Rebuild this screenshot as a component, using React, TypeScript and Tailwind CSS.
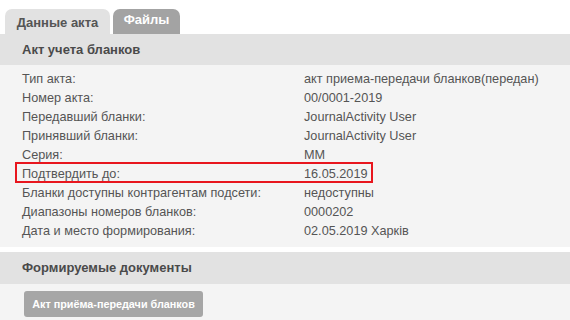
const rows: { label: string; value: string; highlight?: boolean }[] = [
  { label: "Тип акта:", value: "акт приема-передачи бланков(передан)" },
  { label: "Номер акта:", value: "00/0001-2019" },
  { label: "Передавший бланки:", value: "JournalActivity User" },
  { label: "Принявший бланки:", value: "JournalActivity User" },
  { label: "Серия:", value: "MM" },
  { label: "Подтвердить до:", value: "16.05.2019", highlight: true },
  { label: "Бланки доступны контрагентам подсети:", value: "недоступны" },
  { label: "Диапазоны номеров бланков:", value: "0000202" },
  { label: "Дата и место формирования:", value: "02.05.2019 Харків" },
];

export default function App() {
  return (
    <div className="w-[570px] h-[320px] overflow-hidden bg-white font-['Liberation_Sans',Arial,sans-serif] text-[#555]">
      {/* tabs */}
      <div className="flex items-end gap-[3px] pl-[5px] pt-[9px] h-[34px]">
        <div className="w-[105px] h-[25px] rounded-t-[7px] bg-[#e2e2e2] text-[13px] font-bold text-[#555] flex items-center justify-center pt-[2px]">
          Данные акта
        </div>
        <div className="w-[67px] h-[25px] rounded-t-[7px] bg-[#a3a3a3] text-[13px] font-bold text-white flex items-center justify-center pb-[3px]">
          Файлы
        </div>
      </div>

      <div className="h-[31px] bg-[#e2e2e2] flex items-center pl-[22px] text-[13px] font-bold text-[#4a4a4a]">
        Акт учета бланков
      </div>

      <div className="bg-[#f4f4f4] pt-[5px] pb-[6px] pl-[22px]">
        {rows.map((r) => (
          <div key={r.label} className="relative grid grid-cols-[282px_1fr] h-[19px] leading-[19px] text-[12.7px]">
            <span>{r.label}</span>
            <span>{r.value}</span>
            {r.highlight && (
              <span className="absolute left-[-7px] top-[-3px] w-[358px] h-[21px] border-2 border-[#e8161e] pointer-events-none" />
            )}
          </div>
        ))}
      </div>

      <div className="h-[5px]" />

      <div className="h-[32px] bg-[#e2e2e2] flex items-center pl-[22px] text-[13px] font-bold text-[#4a4a4a]">
        Формируемые документы
      </div>

      <div className="bg-[#f4f4f4] h-[40px] pl-[24px] pt-[7px]">
        <button className="w-[179px] h-[26px] rounded-[3px] bg-[#a6a6a6] text-white text-[10.8px] font-bold">
          Акт приёма-передачи бланков
        </button>
      </div>
    </div>
  );
}
